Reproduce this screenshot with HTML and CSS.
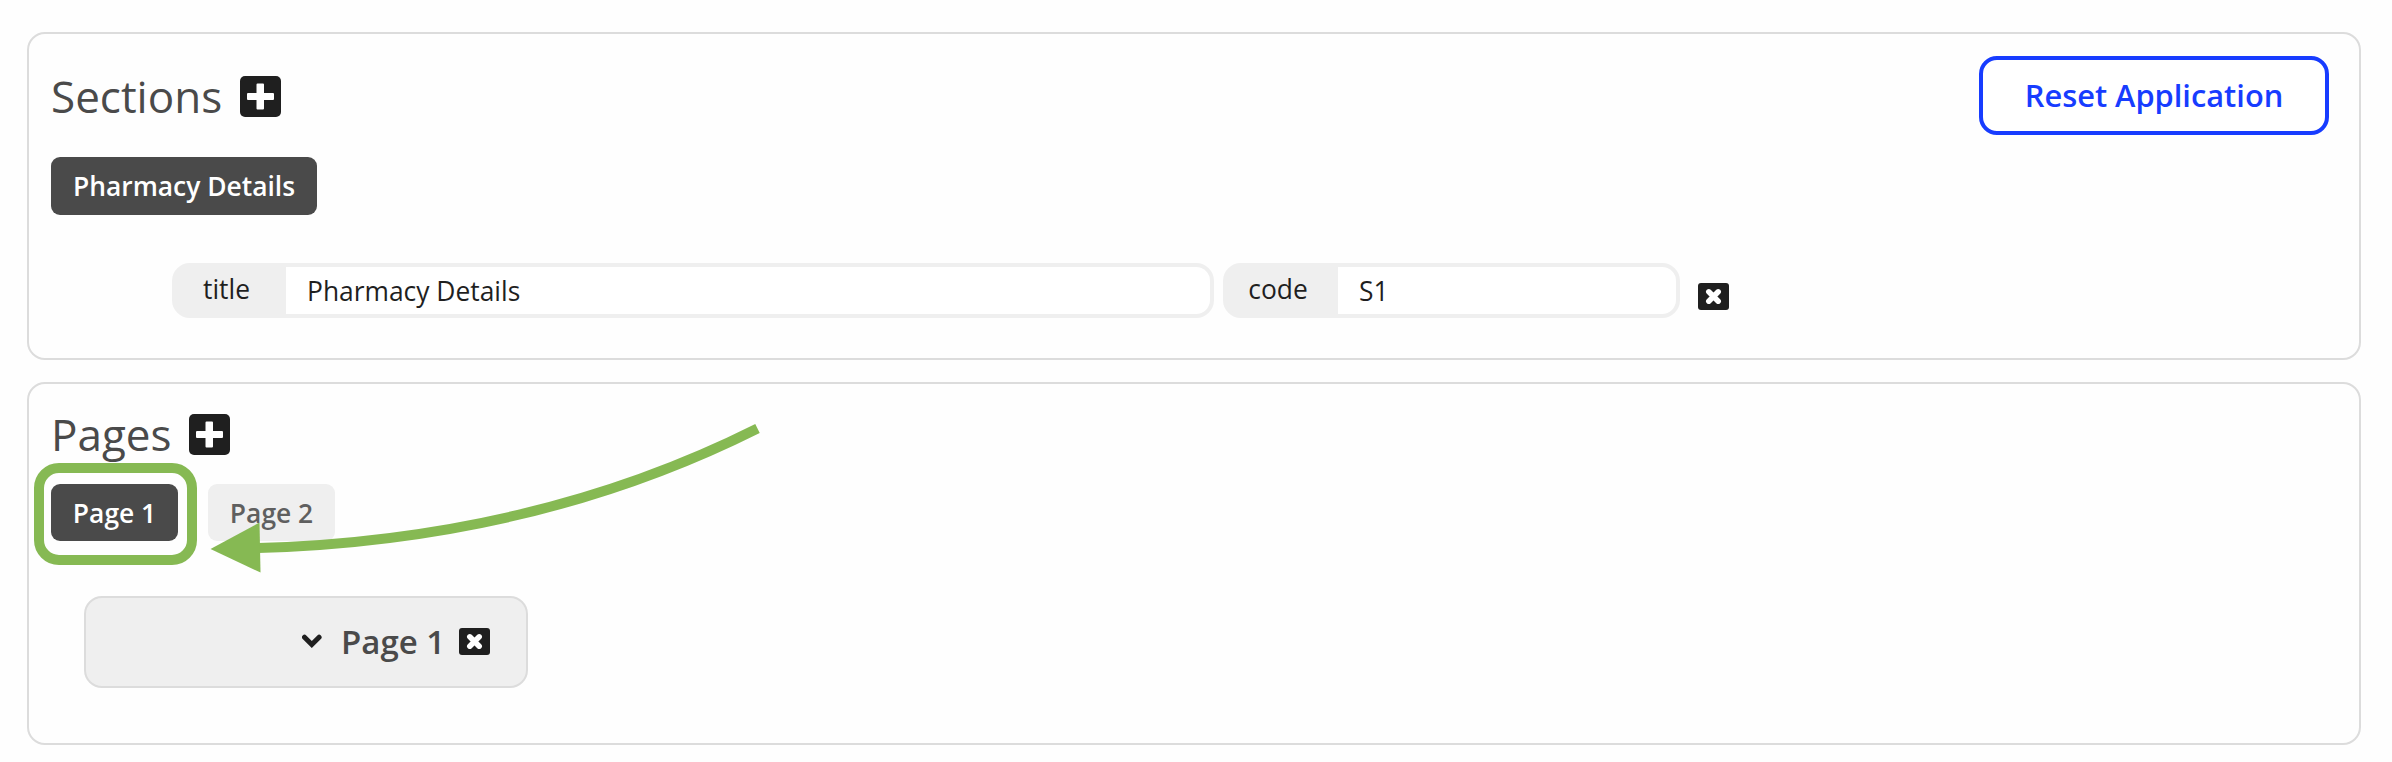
FILE: index.html
```html
<!DOCTYPE html>
<html lang="en">
<head>
<meta charset="utf-8">
<title>Application Builder</title>
<link rel="stylesheet" href="styles.css">
</head>
<body>
<main class="builder">
  <section class="card sections">
    <div class="card-head">
      <h2 class="heading">Sections</h2>
      <svg class="add" viewBox="0 0 41 41"><rect width="41" height="41" rx="5"/><path class="mark" d="M17.500 7.500h5.500a1 1 0 0 1 1 1v8.500h9a1 1 0 0 1 1 1v5a1 1 0 0 1-1 1h-9v8.500a1 1 0 0 1-1 1h-5.500a1 1 0 0 1-1-1v-8.500h-8.500a1 1 0 0 1-1-1v-5a1 1 0 0 1 1-1h8.500v-8.500a1 1 0 0 1 1-1z"/></svg>
      <button class="reset">Reset Application</button>
    </div>
    <div class="tabs">
      <button class="tab tab-section active">Pharmacy Details</button>
    </div>
    <div class="fields">
      <div class="field field-title"><span class="label">title</span><span class="value">Pharmacy Details</span></div>
      <div class="field field-code"><span class="label">code</span><span class="value">S1</span></div>
      <svg class="remove" viewBox="0 0 31 27"><rect width="31" height="27" rx="3"/><path class="cross" d="M10.800 8.800l9.400 9.400M20.200 8.800l-9.400 9.400"/></svg>
    </div>
  </section>
  <section class="card pages">
    <div class="card-head">
      <h2 class="heading">Pages</h2>
      <svg class="add" viewBox="0 0 41 41"><rect width="41" height="41" rx="5"/><path class="mark" d="M17.500 7.500h5.500a1 1 0 0 1 1 1v8.500h9a1 1 0 0 1 1 1v5a1 1 0 0 1-1 1h-9v8.500a1 1 0 0 1-1 1h-5.500a1 1 0 0 1-1-1v-8.500h-8.500a1 1 0 0 1-1-1v-5a1 1 0 0 1 1-1h8.500v-8.500a1 1 0 0 1 1-1z"/></svg>
    </div>
    <div class="tabs">
      <button class="tab active">Page 1</button>
      <button class="tab">Page 2</button>
    </div>
    <div class="page-item">
      <svg class="chevron" viewBox="0 0 20 14"><path d="M2.500 3.200l7.300 7.300 7.300-7.300"/></svg>
      <span class="page-name">Page 1</span>
      <svg class="remove" viewBox="0 0 31 27"><rect width="31" height="27" rx="3"/><path class="cross" d="M10.800 8.800l9.400 9.400M20.200 8.800l-9.400 9.400"/></svg>
    </div>
  </section>
  <svg class="callout" viewBox="0 0 2392 762">
    <rect x="39" y="468" width="153" height="92" rx="20"/>
    <path class="shaft" d="M258 548Q535 540 757.500 428.500"/>
    <path class="head" d="M210.500 549L259.500 522.500L260.500 572.500z"/>
  </svg>
</main>
</body>
</html>
```
FILE: styles.css
```css
* { box-sizing: border-box; }
body {
  margin: 0;
  background: #fefefe;
  font-family: "Open Sans", "Noto Sans", sans-serif;
  color: #1f1f1f;
}
button { font: inherit; padding: 0; cursor: pointer; }
svg { display: block; flex: none; }
.builder {
  position: relative;
  height: 762px;
  padding: 32px 31px 0 27px;
  display: flex;
  flex-direction: column;
  gap: 22px;
}
.card {
  border: 2px solid #dcdcdc;
  border-radius: 18px;
  padding: 0 30px 0 22px;
}
.sections { height: 328px; padding-top: 22px; }
.pages { height: 363px; padding-top: 20px; }
.card-head { display: flex; align-items: center; height: 79px; }
.pages .card-head { height: 60px; }
.heading {
  margin: 0;
  font-size: 44px;
  font-weight: 400;
  line-height: 60px;
  color: #4a4a4a;
  width: 189px;
}
.pages .heading { width: 138px; }
.add { width: 41px; height: 41px; margin-top: 2px; fill: #1f1f1f; }
.pages .add { margin-top: 0; }
.mark { fill: #fff; }
.reset {
  margin-left: auto;
  width: 350px;
  height: 79px;
  padding-bottom: 2px;
  border: 4px solid #173cff;
  border-radius: 18px;
  background: #fff;
  color: #173cff;
  font-size: 30.8px;
  font-weight: 600;
}
.tabs { display: flex; gap: 30px; margin-top: 22px; }
.pages .tabs { margin-top: 20px; }
.tab {
  width: 127px;
  height: 57px;
  border: 0;
  border-radius: 9px;
  background: #efefef;
  color: #5f5f5f;
  font-size: 26.400px;
  font-weight: 600;
}
.tab-section { width: 266px; height: 58px; }
.tab.active { background: #4a4a4a; color: #fff; }
.fields { display: flex; gap: 9px; margin: 48px 0 0 121px; }
.field {
  display: flex;
  height: 55px;
  border: 4px solid #efefef;
  border-radius: 18px;
  background: #efefef;
  font-size: 26.400px;
  line-height: 48px;
}
.field-title { width: 1042px; }
.field-code { width: 457px; }
.label { width: 110px; padding-right: 9px; text-align: center; line-height: 44px; }
.field-code .label { width: 111px; }
.value {
  flex: 1;
  padding-left: 21px;
  background: #fff;
  border-radius: 0 14px 14px 0;
}
.remove { width: 31px; height: 27px; fill: #1f1f1f; }
.cross { stroke: #fff; stroke-width: 5.500px; stroke-linecap: round; }
.fields .remove { margin: 20px 0 0 9px; }
.page-item {
  display: flex;
  align-items: center;
  width: 444px;
  height: 92px;
  margin: 55px 0 0 33px;
  padding: 0 0 2px 216px;
  border: 2px solid #dcdcdc;
  border-radius: 18px;
  background: #efefef;
}
.chevron { width: 20px; height: 14px; fill: none; stroke: #1f1f1f; stroke-width: 5px; stroke-linecap: round; }
.page-name {
  width: 118px;
  padding-left: 19px;
  box-sizing: content-box;
  font-size: 33px;
  font-weight: 600;
  color: #4a4a4a;
}
/* Highlight ring and arrow laid over the page tabs */
.callout {
  position: absolute;
  inset: 0;
  width: 2392px;
  height: 762px;
  pointer-events: none;
  fill: none;
  stroke: #86b953;
  stroke-width: 10px;
}
.callout .head { fill: #86b953; stroke: none; }
```
